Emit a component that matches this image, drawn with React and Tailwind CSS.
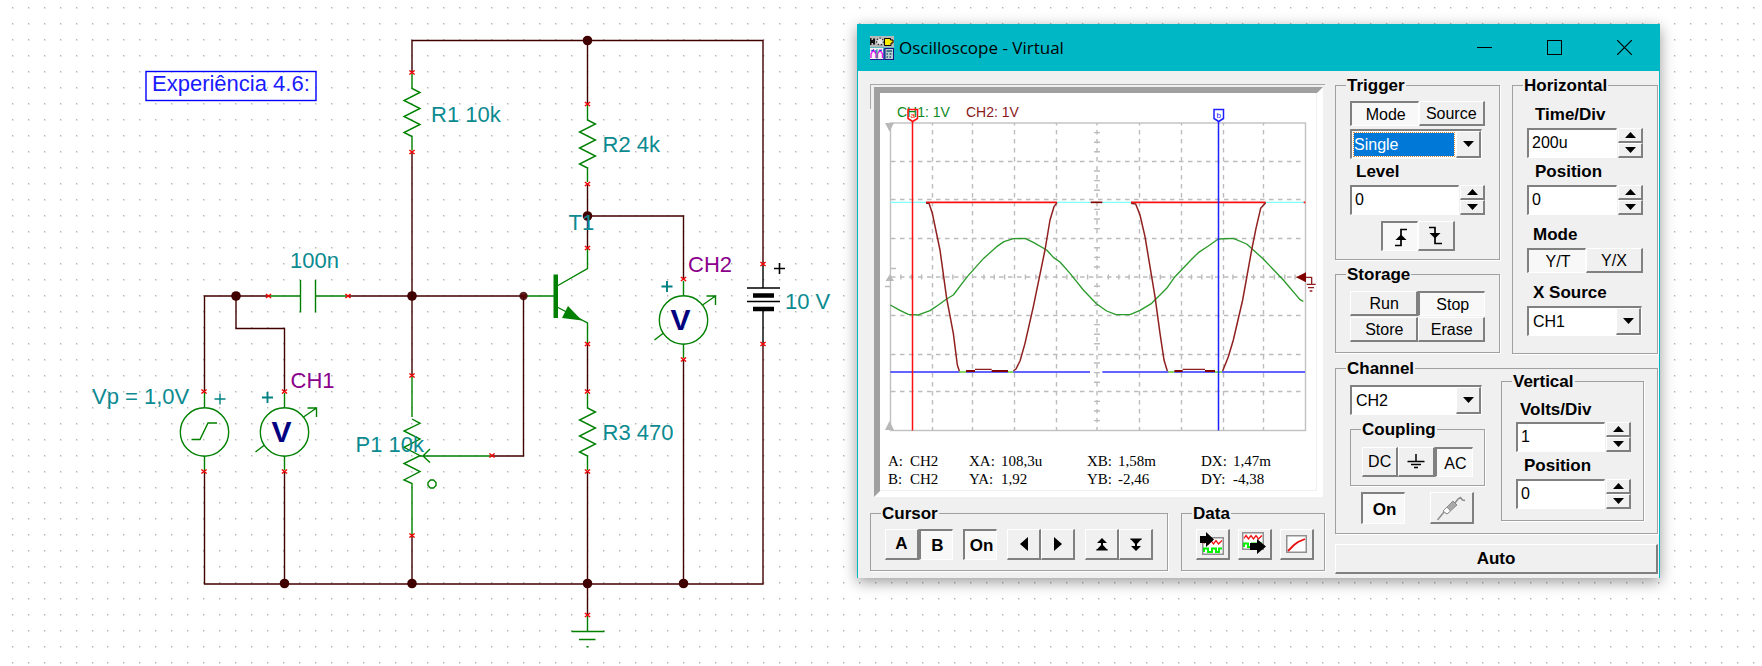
import React from "react";

/* ---------- dotted drawing grid ---------- */

const DOT_PATH = (() => {
  let d = "";
  for (let r = 0; r < 70; r++) {
    for (let c = 0; c < 160; c++) {
      d += `M${Math.round(11.6 + c * 15.98)} ${Math.round(7.4 + r * 15.97)}h1.4v1.4h-1.4z`;
    }
  }
  return d;
})();

function GridDots() {
  return (
    <svg className="absolute inset-0 h-full w-full" aria-hidden="true">
      <path d={DOT_PATH} fill="#b4b4b4" />
    </svg>
  );
}

/* ---------- schematic ---------- */

const WIRE = "#400000";
const PART = "#008000";

const Pin = ({ x, y }) => (
  <path d={`M${x - 2.6} ${y - 2}l5.2 4M${x - 2.6} ${y + 2}l5.2 -4`} stroke="#f00000" strokeWidth="1.5" />
);
const Node = ({ x, y }) => <circle cx={x} cy={y} r="4.8" fill={WIRE} />;
const Plus = ({ x, y, color = "#008080", w = 1.6 }) => (
  <path d={`M${x - 5.5} ${y}h11M${x} ${y - 5.5}v11`} stroke={color} strokeWidth={w} />
);
const Label = ({ x, y, color = "#0b8a90", children }) => (
  <text x={x} y={y} fill={color} fontSize="22">
    {children}
  </text>
);
const Resistor = ({ x, y }) => (
  <path
    d={`M${x} ${y - 15}V${y}L${x + 8} ${y + 4}L${x - 8} ${y + 12}L${x + 8} ${y + 20}L${x - 8} ${y + 28}L${x + 8} ${y + 36}L${x - 8} ${y + 44}L${x} ${y + 48}V${y + 62}`}
    stroke={PART}
    strokeWidth="1.4"
    fill="none"
  />
);
const Meter = ({ x, y }) => (
  <g fill="none" stroke={PART} strokeWidth="1.4">
    <circle cx={x} cy={y} r="24.2" />
    <path d={`M${x} ${y - 39}v15M${x} ${y + 24}v14`} />
    <path d={`M${x + 19} ${y - 15}L${x + 32} ${y - 24}M${x + 23} ${y - 24}h9v9M${x - 29} ${y + 20}l9 -7`} />
    <text x={x - 13} y={y + 10} fontSize="30" fontWeight="700" fill="#000080" stroke="none">
      V
    </text>
  </g>
);

function Schematic() {
  return (
    <svg
      viewBox="0 0 857 666"
      className="relative block h-auto w-full font-['Liberation_Sans',Arial,sans-serif]"
      role="img"
      aria-label="Circuit schematic"
    >
      <rect x="146" y="71.5" width="170" height="29" fill="none" stroke="#0000ff" strokeWidth="1.4" />
      <Label x="152" y="90.5" color="#1a1aff">Experiência 4.6:</Label>

      <g fill="none" stroke={WIRE} strokeWidth="1.4">
        <path d="M412 72V40.5H763V264" />
        <path d="M412 152V376M412 536V584" />
        <path d="M268 296H204.5V391M236 296V328.5H284.5V391" />
        <path d="M348 296H523.5V456H492" />
        <path d="M587.5 40V104M587.5 184V248M587.5 216H683.5V279M587.5 344V391M587.5 472V615" />
        <path d="M683.5 359V584M204.5 472V584H763V344M284.5 472V584" />
      </g>

      <Resistor x={412} y={88.5} />
      <Resistor x={587.5} y={120} />
      <Resistor x={587.5} y={408} />

      <g fill="none" stroke={PART} strokeWidth="1.4">
        <path d="M268 296H300.5M300.5 280V312.5M315.5 280V312.5M315.5 296H348" />
        <path d="M204.5 391V408M204.5 456V472" />
        <circle cx="204.5" cy="432" r="24.2" />
        <path d="M191.5 439.5H200L208 423H217" />
        <path d="M412 376V417M412 419L420 423.3L404 431L420 439L404 447.3L420 455.7L404 463.5L420 471.5L404 480L412 483.5V535" />
        <path d="M420 456H492M430 449L423 456L430 462.5" />
        <path d="M430.5 480h3l2.5 2.5v3l-2.5 2.5h-3l-2.5 -2.5v-3z" />
        <path d="M523.5 296H555M557 286L587.5 268.5V248M557 307L587.5 323V344" />
        <path d="M587.5 616V631.5M571.5 631.5H604.5M579 639.5H595.5" />
      </g>
      <rect x="553.5" y="274.5" width="4.5" height="43.5" fill={PART} />
      <path d="M568 306L562 318L582 320.5z" fill={PART} />
      <rect x="586.5" y="646" width="2" height="1.5" fill={PART} />

      <Meter x={284.5} y={432} />
      <Meter x={683.5} y={320} />

      <g stroke="#000000" strokeWidth="1.4">
        <path d="M763 264V288M763 311V344M747 288H780M747 301.5H780" />
        <path d="M753 295.5H774M753 309H774" strokeWidth="4.6" />
      </g>

      <Node x={587.5} y={40.5} />
      <Node x={236} y={296} />
      <Node x={412} y={296} />
      <Node x={587.5} y={216} />
      <Node x={284.5} y={583.5} />
      <Node x={412} y={583.5} />
      <Node x={587.5} y={583.5} />
      <Node x={683.5} y={583.5} />

      {[
        [412, 72.5], [412, 152], [412, 375.5], [412, 535.5], [268.5, 296], [348, 296],
        [204, 391.5], [204, 471.5], [284.5, 391.5], [284.5, 471.5], [523.5, 296],
        [492, 455.5], [587.5, 104], [587.5, 184], [587.5, 248], [587.5, 344],
        [587.5, 391.5], [587.5, 471.5], [587.5, 615], [683.5, 279], [683.5, 359.5],
        [763, 264], [763, 344],
      ].map(([x, y]) => (
        <Pin key={`${x}-${y}`} x={x} y={y} />
      ))}
      <circle cx="523.5" cy="296" r="4.2" fill={WIRE} fillOpacity="0.85" />

      <Plus x={220} y={399} w={1.4} />
      <Plus x={267.5} y={397.5} w={1.9} />
      <Plus x={667} y={286.5} w={1.9} />
      <Plus x={779.5} y={268.5} color="#000000" />

      <Label x="431" y="121.5">R1 10k</Label>
      <Label x="602.5" y="152">R2 4k</Label>
      <Label x="602.5" y="440">R3 470</Label>
      <Label x="290" y="267.5">100n</Label>
      <Label x="568.5" y="230">T1</Label>
      <Label x="92" y="404">Vp = 1,0V</Label>
      <Label x="355.5" y="452">P1 10k</Label>
      <Label x="785" y="308.5">10 V</Label>
      <Label x="290.5" y="388" color="#8b008b">CH1</Label>
      <Label x="688" y="272" color="#8b008b">CH2</Label>
    </svg>
  );
}

/* ---------- controls ---------- */

const RAISED = "border-t border-l border-b-2 border-r-2 border-t-white border-l-white border-b-[#808080] border-r-[#808080] bg-[#f0f0f0]";
const SUNKEN = "border-t-2 border-l-2 border-b border-r border-t-[#808080] border-l-[#808080] border-b-white border-r-white";

function Btn({ pressed, className = "", children, ...rest }) {
  return (
    <button
      type="button"
      aria-pressed={pressed}
      className={`flex items-center justify-center ${pressed ? SUNKEN + " bg-[#f8f8f8] pt-0.5 pl-0.5" : RAISED} ${className}`}
      {...rest}
    >
      {children}
    </button>
  );
}

function Group({ title, className = "", bodyClass = "", children }) {
  return (
    <fieldset className={`min-w-0 border border-[#a0a0a0] shadow-[1px_1px_0_#ffffff] ${className}`}>
      <legend className="ml-2.5 h-5 bg-[#f0f0f0] px-px pt-px text-[17px] leading-5 font-bold">{title}</legend>
      <div className={bodyClass}>{children}</div>
    </fieldset>
  );
}

const Triangle = ({ down }) => (
  <svg width="11" height="6" viewBox="0 0 11 6" aria-hidden="true">
    <path d={down ? "M0 0H11L5.5 6z" : "M0 6H11L5.5 0z"} fill="#000" />
  </svg>
);

function Spin({ id, value }) {
  return (
    <div className="flex h-[30px]">
      <input id={id} defaultValue={value} className={`min-w-0 flex-1 bg-white px-[3px] pb-px text-base leading-5 outline-none ${SUNKEN}`} />
      <div className="flex w-[26px] flex-col pl-px">
        <Btn className="flex-1" aria-label="Increase"><Triangle /></Btn>
        <Btn className="flex-1" aria-label="Decrease"><Triangle down /></Btn>
      </div>
    </div>
  );
}

function Select({ label, value, options, active, className = "" }) {
  return (
    <div className={`flex h-[30px] items-stretch bg-white ${SUNKEN} ${className}`}>
      <select
        aria-label={label}
        defaultValue={value}
        className={`min-w-0 flex-1 appearance-none rounded-none text-base leading-5 ${
          active ? "m-0.5 bg-[#0078d7] text-white outline-1 outline-[#e08a3c] outline-dotted" : "bg-white pl-1 outline-none"
        }`}
      >
        {options.map((o) => (
          <option key={o}>{o}</option>
        ))}
      </select>
      <span className={`flex w-[25px] items-center justify-center ${RAISED}`}>
        <Triangle down />
      </span>
    </div>
  );
}

const FieldLabel = ({ htmlFor, className = "", children }) => (
  <label htmlFor={htmlFor} className={`block text-[17px] font-bold ${className}`}>
    {children}
  </label>
);

/* ---------- icons ---------- */

const AppIcon = () => (
  <svg width="24" height="24" viewBox="0 0 24 24" aria-hidden="true">
    <rect width="24" height="11.5" fill="#b9b9b9" />
    <path d="M0 2h1.5v2h1.500v-1.500h2v6h-2v-1.500h-1.500v2h-1.500z" fill="#111" />
    <circle cx="10" cy="5.5" r="3.4" fill="#e2e2e2" stroke="#333" strokeWidth="1.2" strokeDasharray="1.6 1.4" />
    <path d="M14.5 2.5h6v1.5h2.5v3h-2v2.5h-6.500z" fill="#ffee00" stroke="#000" strokeWidth="1" />
    <rect y="12" width="13.500" height="12" fill="#f4f4f4" />
    <path d="M1 22V18L3.500 14L6 18V22M7.500 22V18L10 14L12.500 18V22" fill="none" stroke="#e815e8" strokeWidth="1.4" />
    <path d="M1 15l3-1M6 14v3M9 15l3-1" stroke="#1c38e0" strokeWidth="1.2" />
    <path d="M7 13v10" stroke="#16b070" strokeWidth="1" />
    <path d="M0 23.500H14V12.500" fill="none" stroke="#1a1a90" />
    <rect x="14.500" y="12" width="9.500" height="12" fill="#15157d" />
    <rect x="15.500" y="13" width="7.500" height="10" fill="#b9cdd0" />
    <path d="M16.500 15h5.500M16.500 18h1.500M19.500 18h2M16.500 21h1.500M19.500 21h1.500" stroke="#206070" strokeWidth="1.5" />
  </svg>
);

const Arrow = ({ left }) => (
  <svg width="8" height="14" viewBox="0 0 8 14" aria-hidden="true">
    <path d={left ? "M8 0V14L0 7z" : "M0 0V14L8 7z"} fill="#000" />
  </svg>
);

const DoubleArrow = ({ down }) => (
  <svg width="12" height="13" viewBox="0 0 12 13" aria-hidden="true">
    <g transform={down ? "rotate(180 6 6.5)" : undefined}>
      <path d="M6 0L11 5H1zM6 6L12 12.500H0zM0.500 11h11v1.500h-11z" fill="#000" />
      <path d="M5 4h2v4h-2z" fill="#000" />
    </g>
  </svg>
);

const EdgeIcon = ({ falling }) => (
  <svg width="16" height="19" viewBox="0 0 16 19" aria-hidden="true">
    <g fill="none" stroke="#000" strokeWidth="1.700">
      <path d={falling ? "M1 1.500H7V17.500H14" : "M2 17.500H8V1.500H14"} />
    </g>
    <path d={falling ? "M1.500 7H12.500L7 12.500z" : "M2.500 12H13.500L8 6.500z"} fill="#000" />
  </svg>
);

const GroundIcon = () => (
  <svg width="18" height="15" viewBox="0 0 18 15" aria-hidden="true">
    <path d="M9 0V7.500M0.500 7.500H17.500M4 10.500H14M7 13.500H11" stroke="#000" strokeWidth="1.500" />
  </svg>
);

const ProbeIcon = () => (
  <svg width="32" height="28" viewBox="0 0 32 28" aria-hidden="true">
    <path d="M1.500 26L8 18" stroke="#909090" strokeWidth="1.500" />
    <path d="M7 17L17 7L21 11L11 20z" fill="#a8a8a8" stroke="#8c8c8c" />
    <path d="M7 17L11 13L14.500 17L11 20z" fill="#ffffff" stroke="#8c8c8c" />
    <path d="M19 9L22 5L24.500 3.500L26.500 6L29 6.500" fill="none" stroke="#8c8c8c" strokeWidth="1.500" />
  </svg>
);

const Waves = ({ x, y }) => (
  <g transform={`translate(${x} ${y})`}>
    <rect x="0.750" y="0.750" width="20.500" height="16.500" fill="#fff" stroke="#909090" strokeWidth="1.500" />
    <path d="M2 6.500L4 3.500L6.500 7L9 3.500L11.500 7L14 3.500L16.500 7L20 3.500" fill="none" stroke="#f01010" strokeWidth="1.300" />
    <path d="M2 15V11.500H6V15H10V11.500H14V15H17V11.500H20" fill="none" stroke="#00f000" strokeWidth="1.900" />
  </g>
);

const ImportIcon = () => (
  <svg width="25" height="24" viewBox="0 0 25 24" aria-hidden="true">
    <Waves x={2} y={5} />
    <path d="M0 4H6V0L14 7.500L6 15V11H0z" fill="#000" />
  </svg>
);
const ExportIcon = () => (
  <svg width="25" height="24" viewBox="0 0 25 24" aria-hidden="true">
    <Waves x={0} y={0} />
    <path transform="translate(8 7)" d="M0 4H7V0L16 7.500L7 15V11H0z" fill="#000" />
  </svg>
);
const CurveIcon = () => (
  <svg width="21" height="18" viewBox="0 0 21 18" aria-hidden="true">
    <rect x="0.750" y="0.750" width="19.500" height="16.500" fill="#fff" stroke="#909090" strokeWidth="1.500" />
    <path d="M2 16L8 10L12 7L19 4" fill="none" stroke="#e81010" strokeWidth="1.800" />
  </svg>
);

/* ---------- oscilloscope trace ---------- */

const V_LINES = [932.5, 972.5, 1014.5, 1056.5, 1097, 1139.5, 1181.5, 1223.5, 1263.5];
const H_LINES = [161.5, 199.5, 238.5, 277, 315.5, 354.5, 391.5];

function Plot() {
  const vTicks = [];
  for (let i = 1; i < 32; i++) if (i % 4) vTicks.push(`M1094 ${(123 + i * 9.6).toFixed(1)}h6`);
  const hTicks = [];
  for (let i = 1; i < 40; i++) if (i % 4) hTicks.push(`M${(890.5 + i * 10.375).toFixed(1)} 274.500v5`);
  return (
    <svg
      viewBox="880 93 436 347"
      className="block h-auto w-full font-['Liberation_Sans',Arial,sans-serif]"
      role="img"
      aria-label="Oscilloscope trace"
    >
      <text x="897" y="117" fontSize="14" fill="#0c8a1c">CH1: 1V</text>
      <text x="966" y="117" fontSize="14" fill="#8a1a1a">CH2: 1V</text>

      <g fill="none" stroke="#bcbcbc" strokeWidth="1.4">
        <rect x="890.5" y="123" width="415" height="307.500" stroke="#c0c0c0" />
        <path d={V_LINES.map((x) => `M${x} 123V430`).join("")} strokeDasharray="4.500 4.500" strokeDashoffset="2" />
        <path d={H_LINES.map((y) => `M891 ${y}H1305`).join("")} strokeDasharray="4.500 4.500" />
        <path d={vTicks.join("") + hTicks.join("")} />
        <path d="M891 268.500h5M885 286.500h5" />
      </g>
      <path d="M885 123H894L889.500 131.500zM885 430H894L889.500 421zM885.500 281H894L889.800 274.500z" fill="#b8b8b8" />

      <g transform="translate(850 200) scale(0.33333)" fill="none" strokeLinejoin="round">
        <path d="M121 7H722M757 7H1365" stroke="#80ffff" strokeWidth="4" />
        <path d="M228 7H621M843 7H1247M1361 7H1366" stroke="#ff1010" strokeWidth="5" />
        <path d="M722 7H757" stroke="#800000" strokeWidth="5" />
        <path d="M121 516H720M757 516H1365" stroke="#3030ff" strokeWidth="5" />
        <path
          d="M121 315L150 331L175 343L205 345L240 332L265 315L290 297L310 285L350 232L400 176L440 140L462 125L490 116L525 115L550 127L590 150L610 172L630 186L660 220L700 270L740 312L770 333L798 344L840 344L870 331L905 310L930 285L950 265L975 230L1025 178L1045 158L1075 138L1105 117L1150 115L1190 132L1240 177L1300 240L1350 299L1360 304"
          stroke="#2a9a2a"
          strokeWidth="4"
        />
        <path
          d="M228 10L237 10L247 40L270 150L290 295L310 400L322 495L328 513M490 513L498 507L510 483L525 430L550 320L585 150L600 60L612 20L621 8M843 10L857 12L870 45L885 110L915 290L930 400L942 480L952 513M1118 513L1135 470L1150 420L1178 300L1205 150L1218 85L1232 25L1247 8"
          stroke="#902020"
          strokeWidth="4.500"
        />
        <path d="M375 508H425M998 508H1065" stroke="#902020" strokeWidth="3.500" />
        <path d="M348 513H375M425 513H474M973 513H998M1065 513H1095" stroke="#800000" strokeWidth="5.500" />
        <path d="M328 516H348M474 516H490M955 516H973M1095 516H1116" stroke="#90ff30" strokeWidth="4" />
        <path d="M1338 232L1368 217V247z" fill="#800000" />
        <path d="M1368 232H1385V253M1370 253H1397M1374 263H1392M1379 273H1387" stroke="#902020" strokeWidth="4" />
      </g>

      <path d="M912.500 121V430.500" stroke="#ff1010" strokeWidth="1.500" />
      <path d="M1218.500 121V430.500" stroke="#2020ff" strokeWidth="1.500" />
      <path d="M908 109.500H917.500V118.500L912.700 121.500L908 118.500z" fill="none" stroke="#ff1010" strokeWidth="1.500" />
      <path d="M1214 109.500H1223.500V118.500L1218.700 121.500L1214 118.500z" fill="none" stroke="#2020ff" strokeWidth="1.500" />
      <text x="910.500" y="117.500" fontSize="8" fill="#ff1010">a</text>
      <text x="1216.500" y="117.500" fontSize="8" fill="#2020ff">b</text>
    </svg>
  );
}

const READOUT = [
  ["A:", "CH2", "XA:", "108,3u", "XB:", "1,58m", "DX:", "1,47m"],
  ["B:", "CH2", "YA:", "1,92", "YB:", "-2,46", "DY:", "-4,38"],
];

function Screen() {
  return (
    <div className="relative border-t border-[#a8a8a8] pt-0.5 pr-0.5 pl-1">
      <span className="absolute top-0 left-0 h-6 w-px bg-[#a8a8a8]" />
      <div className="border-6 border-t-[#a0a0a0] border-r-white border-b-white border-l-[#a0a0a0]">
        <div className="border-r border-b border-[#f0f0f0] bg-white">
          <Plot />
          <div className="grid grid-cols-[22px_59px_32px_86px_31px_83px_32px_1fr] pt-3 pb-[2px] pl-2 font-['Liberation_Serif','Times_New_Roman',serif] text-[15px] leading-[18px]">
            {READOUT.flat().map((t, i) => (
              <span key={i}>{t}</span>
            ))}
          </div>
        </div>
      </div>
    </div>
  );
}

/* ---------- oscilloscope window ---------- */

function TitleBar() {
  const btn = "flex w-[70px] items-center justify-center";
  return (
    <header className="flex h-[47px] items-stretch bg-[#00b7c6]">
      <div className="flex flex-1 items-center gap-[5px] pl-3">
        <AppIcon />
        <h1 className="font-['Open_Sans','Noto_Sans',sans-serif] text-[17px]">Oscilloscope - Virtual</h1>
      </div>
      <button type="button" aria-label="Minimize" className={btn}>
        <svg width="15" height="15"><path d="M0 7.500H15" stroke="#000" /></svg>
      </button>
      <button type="button" aria-label="Maximize" className={btn}>
        <svg width="15" height="15"><rect x="0.500" y="0.500" width="14" height="14" fill="none" stroke="#000" /></svg>
      </button>
      <button type="button" aria-label="Close" className={btn}>
        <svg width="15" height="15"><path d="M0 0L15 15M15 0L0 15" stroke="#000" strokeWidth="1.200" /></svg>
      </button>
    </header>
  );
}

function CursorAndData() {
  const b = "h-[31px] w-[34px] text-[17px] font-bold";
  return (
    <div className="mt-1.5 flex justify-between">
      <Group title="Cursor" bodyClass="flex gap-2.5 px-3.5 pt-1.5 pb-2.5">
        <div className="flex">
          <Btn className={b}>A</Btn>
          <Btn className={b} pressed>B</Btn>
        </div>
        <Btn className={b} pressed>On</Btn>
        <div className="flex">
          <Btn className={b} aria-label="Move left"><Arrow left /></Btn>
          <Btn className={b} aria-label="Move right"><Arrow /></Btn>
        </div>
        <div className="flex">
          <Btn className={b} aria-label="Next maximum"><DoubleArrow /></Btn>
          <Btn className={b} aria-label="Next minimum"><DoubleArrow down /></Btn>
        </div>
      </Group>
      <Group title="Data" bodyClass="flex gap-2 pr-2.5 pl-3.5 pt-1.5 pb-2.5">
        <Btn className={b} aria-label="Import curves"><ImportIcon /></Btn>
        <Btn className={b} aria-label="Export curves"><ExportIcon /></Btn>
        <Btn className={b} aria-label="Show diagram"><CurveIcon /></Btn>
      </Group>
    </div>
  );
}

function TriggerGroup() {
  return (
    <Group title="Trigger" bodyClass="px-3.5 pt-1.5 pb-2">
      <div className="mb-[3px] flex h-[25px] text-base">
        <Btn pressed className="flex-1">Mode</Btn>
        <Btn className="flex-1 pt-0.5">Source</Btn>
      </div>
      <Select label="Trigger mode" value="Single" options={["Single", "Normal", "Auto"]} active className="mr-[3px]" />
      <FieldLabel htmlFor="level" className="pl-1.5 leading-[26px]">Level</FieldLabel>
      <Spin id="level" value="0" />
      <div className="mt-1.5 flex h-[30px] justify-center">
        <Btn pressed className="w-[37px]" aria-label="Rising edge"><EdgeIcon /></Btn>
        <Btn className="w-[37px]" aria-label="Falling edge"><EdgeIcon falling /></Btn>
      </div>
    </Group>
  );
}

function StorageGroup() {
  return (
    <Group title="Storage" bodyClass="grid grid-cols-2 gap-y-px px-3.5 pt-[7px] pb-2.5 text-base">
      <Btn className="h-[25px] pt-0.5 pl-0.5">Run</Btn>
      <Btn className="h-[25px]" pressed>Stop</Btn>
      <Btn className="h-[25px] pt-0.5 pl-0.5">Store</Btn>
      <Btn className="h-[25px] pt-0.5 pl-0.5">Erase</Btn>
    </Group>
  );
}

function HorizontalGroup() {
  return (
    <Group title="Horizontal" bodyClass="px-3.5 pt-1.5 pb-[17px]">
      <FieldLabel htmlFor="timediv" className="pl-2 leading-[27px]">Time/Div</FieldLabel>
      <Spin id="timediv" value="200u" />
      <FieldLabel htmlFor="hpos" className="pl-2 leading-[27px]">Position</FieldLabel>
      <Spin id="hpos" value="0" />
      <div className="mt-1.5 pl-1.5 text-[17px] leading-[27px] font-bold">Mode</div>
      <div className="flex h-[25px] text-base">
        <Btn pressed className="flex-1">Y/T</Btn>
        <Btn className="flex-1 pt-0.5">Y/X</Btn>
      </div>
      <div className="mt-1.5 pl-1.5 text-[17px] leading-[27px] font-bold">X Source</div>
      <Select label="X Source" value="CH1" options={["CH1", "CH2"]} className="mr-px" />
    </Group>
  );
}

function ChannelGroup() {
  return (
    <Group title="Channel" className="mt-1" bodyClass="flex justify-between pr-[13px] pl-3.5">
      <div className="w-[135px] pt-[7px] pb-[9px]">
        <Select label="Channel" value="CH2" options={["CH1", "CH2"]} className="mr-[3px]" />
        <Group title="Coupling" className="mt-1" bodyClass="flex h-[46px] px-[11px] py-2 text-base">
          <Btn className="flex-1">DC</Btn>
          <Btn className="flex-1" aria-label="Ground"><GroundIcon /></Btn>
          <Btn className="flex-1" pressed>AC</Btn>
        </Group>
        <div className="mt-1.5 flex h-8 justify-between px-[11px] text-[17px] font-bold">
          <Btn className="w-11" pressed>On</Btn>
          <Btn className="w-11" aria-label="Probe"><ProbeIcon /></Btn>
        </div>
      </div>
      <Group title="Vertical" className="-mt-[7px] mb-3 w-[143px]" bodyClass="pt-1.5 pr-3 pl-3.5">
        <FieldLabel htmlFor="voltsdiv" className="pl-1 leading-[25px]">Volts/Div</FieldLabel>
        <Spin id="voltsdiv" value="1" />
        <FieldLabel htmlFor="vpos" className="pl-2 leading-[27px]">Position</FieldLabel>
        <Spin id="vpos" value="0" />
      </Group>
    </Group>
  );
}

function Oscilloscope() {
  return (
    <section className="relative border-x border-[#00b7c6] bg-[#f0f0f0] font-['Liberation_Sans',Arial,sans-serif] text-black shadow-[0_4px_14px_rgba(0,0,0,0.4)]">
      <TitleBar />
      <div className="flex gap-2.5 pr-px pl-3">
        <div className="min-w-0 flex-1 pt-[13px] pb-1.5">
          <Screen />
          <CursorAndData />
        </div>
        <div className="w-[323px] shrink-0 pt-1 pb-1">
          <div className="grid grid-cols-[165px_146px] justify-between">
            <div className="flex flex-col gap-1">
              <TriggerGroup />
              <StorageGroup />
            </div>
            <HorizontalGroup />
          </div>
          <ChannelGroup />
          <Btn className="mt-2.5 h-[30px] w-full text-[17px] font-bold">Auto</Btn>
        </div>
      </div>
    </section>
  );
}

export default function App() {
  return (
    <main className="relative min-h-screen overflow-hidden bg-white">
      <GridDots />
      <div className="relative flex items-start pr-[102px]">
        <div className="min-w-0 flex-[857]">
          <Schematic />
        </div>
        <div className="min-w-0 flex-[803] pt-6">
          <Oscilloscope />
        </div>
      </div>
    </main>
  );
}
